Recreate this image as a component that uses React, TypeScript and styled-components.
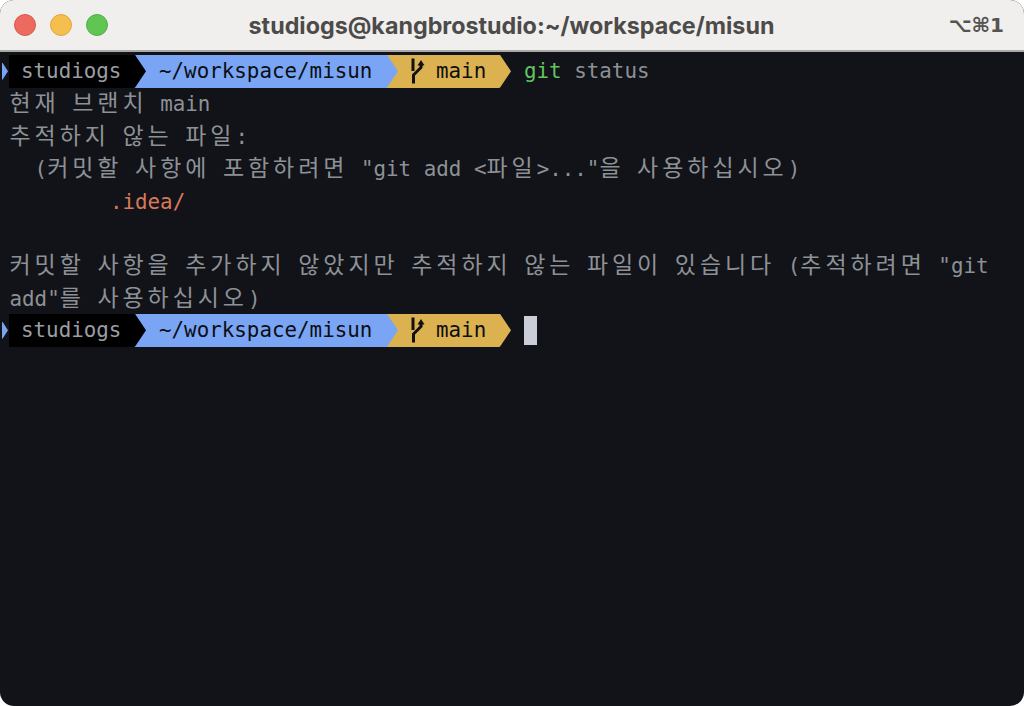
import styled, { createGlobalStyle } from 'styled-components'

const cell = 12.55
const mono = '"DejaVu Sans Mono", "Liberation Mono", monospace'
const hangulFont = '"Noto Sans CJK KR", sans-serif'
const hangulSize = 23

const GlobalStyle = createGlobalStyle`
  html, body {
    margin: 0;
    padding: 0;
    background: #fff;
  }
`

// hangul takes two cells in the terminal grid, so runs get their own spacing
const HangulRun = styled.span`
  font-family: ${hangulFont};
  font-size: ${hangulSize}px;
  letter-spacing: ${cell * 2 - hangulSize * 0.92}px;
  line-height: 1;
`

const TermText = ({ text }: { text: string }) => (
  <>
    {text.split(/([\uac00-\ud7a3]+)/).map((part, i) =>
      /[\uac00-\ud7a3]/.test(part) ? <HangulRun key={i}>{part}</HangulRun> : part
    )}
  </>
)

const Window = styled.div`
  width: 1024px;
  height: 706px;
  border-radius: 14px;
  overflow: hidden;
  display: flex;
  flex-direction: column;
  background: #111318;
`

const TitleBar = styled.header`
  height: 50px;
  flex-shrink: 0;
  display: grid;
  grid-template-columns: 1fr auto 1fr;
  align-items: center;
  padding: 0 20px 0 14px;
  background: #f0efed;
  border-bottom: 2px solid #a9a9a8;
`

const Lights = styled.div`
  display: flex;
  gap: 14px;
`

const Light = styled.span<{ $color: string; $edge: string }>`
  width: 22px;
  height: 22px;
  box-sizing: border-box;
  border-radius: 50%;
  background: ${p => p.$color};
  border: 1px solid ${p => p.$edge};
`

const Title = styled.div`
  margin-left: 5px;
  font-family: Inter, "Liberation Sans", sans-serif;
  font-size: 23.3px;
  font-weight: 700;
  color: #4c4b4a;
  white-space: nowrap;
`

const Shortcut = styled.div`
  justify-self: end;
  font-family: "DejaVu Sans", sans-serif;
  font-size: 20px;
  font-weight: 700;
  color: #555453;
  white-space: nowrap;
`

const Terminal = styled.main`
  flex: 1;
  padding: 3px 0 0 9.5px;
  font-family: ${mono};
  font-size: 20.85px;
  color: #8d9196;
`

const Line = styled.div`
  height: 32.38px;
  line-height: 32.38px;
  white-space: pre;
  display: flex;
  align-items: center;
`

const PlainLine = styled(Line)`
  display: block;
  box-sizing: border-box;
  padding-top: 1px;
`

const Segment = styled.span<{ $bg: string; $fg: string; $w: number; $pad: number }>`
  position: relative;
  box-sizing: border-box;
  display: flex;
  align-items: center;
  height: 33px;
  width: ${p => p.$w}px;
  padding-left: ${p => p.$pad}px;
  background: ${p => p.$bg};
  color: ${p => p.$fg};

  &::after {
    content: '';
    position: absolute;
    z-index: 1;
    left: 100%;
    top: 0;
    width: 12px;
    height: 100%;
    background: ${p => p.$bg};
    clip-path: polygon(0 0, 8% 0, 100% 50%, 8% 100%, 0 100%);
  }
`

const FirstSegment = styled(Segment)`
  margin-left: -0.5px;
`

const StartMark = styled.span`
  position: absolute;
  left: -7.5px;
  top: 8px;
  width: 6.5px;
  height: 17px;
  background: #7aa5f5;
  clip-path: polygon(0 0, 15% 0, 100% 50%, 15% 100%, 0 100%);
`

const BranchIcon = styled.svg`
  width: 16px;
  height: 26px;
  margin-right: 11px;
  flex-shrink: 0;
`

const Command = styled.span`
  margin-left: 25px;
  color: #8d9196;
`

const GitWord = styled.span`
  color: #62c462;
`

const Untracked = styled.span`
  color: #d9785a;
`

const Cursor = styled.span`
  width: 13px;
  height: 29px;
  margin-left: 25px;
  background: #c9ced8;
`

const Branch = () => (
  <BranchIcon viewBox="0 0 16 26" fill="none" stroke="#111" strokeWidth="3">
    <path d="M4 0.5V13" />
    <path d="M12 6v3.5L4.5 17v8.5" />
    <path d="M8.5 7.5 12 2l3.5 5.5z" fill="#111" stroke="none" />
  </BranchIcon>
)

const Prompt = ({ children }: { children?: React.ReactNode }) => (
  <Line>
    <FirstSegment $bg="#000" $fg="#9a9ea3" $w={125} $pad={12}>
      <StartMark />
      studiogs
    </FirstSegment>
    <Segment $bg="#7aa5f5" $fg="#0c0e12" $w={252} $pad={25}>
      ~/workspace/misun
    </Segment>
    <Segment $bg="#dcb14f" $fg="#0c0e12" $w={113} $pad={23}>
      <Branch />
      main
    </Segment>
    {children}
  </Line>
)

export default function App() {
  return (
    <>
      <GlobalStyle />
      <Window>
        <TitleBar>
          <Lights>
            <Light $color="#ec6a5e" $edge="#d8584d" />
            <Light $color="#f4bf4f" $edge="#dfa63c" />
            <Light $color="#61c554" $edge="#4fae44" />
          </Lights>
          <Title>studiogs@kangbrostudio:~/workspace/misun</Title>
          <Shortcut>⌥⌘1</Shortcut>
        </TitleBar>
        <Terminal>
          <Prompt>
            <Command>
              <GitWord>git</GitWord> status
            </Command>
          </Prompt>
          <PlainLine><TermText text="현재 브랜치 main" /></PlainLine>
          <PlainLine><TermText text="추적하지 않는 파일:" /></PlainLine>
          <PlainLine><TermText text={'  (커밋할 사항에 포함하려면 "git add <파일>..."을 사용하십시오)'} /></PlainLine>
          <PlainLine>{'        '}<Untracked>.idea/</Untracked></PlainLine>
          <PlainLine> </PlainLine>
          <PlainLine><TermText text={'커밋할 사항을 추가하지 않았지만 추적하지 않는 파일이 있습니다 (추적하려면 "git'} /></PlainLine>
          <PlainLine><TermText text={'add"를 사용하십시오)'} /></PlainLine>
          <Prompt>
            <Cursor />
          </Prompt>
        </Terminal>
      </Window>
    </>
  )
}
